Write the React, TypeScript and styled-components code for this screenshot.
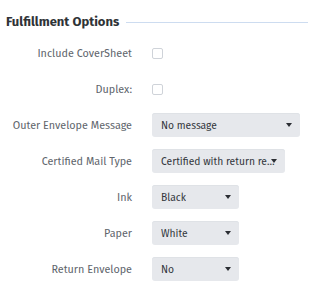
import { createGlobalStyle, styled } from 'styled-components';

const GlobalStyle = createGlobalStyle`
  html, body {
    margin: 0;
    padding: 0;
    background: #ffffff;
  }
  body {
    font-family: 'Fira Sans', Lato, 'Liberation Sans', sans-serif;
  }
`;

type Field =
  | { kind: 'check'; label: string }
  | { kind: 'select'; label: string; value: string; width: number };

const fields: Field[] = [
  { kind: 'check', label: 'Include CoverSheet' },
  { kind: 'check', label: 'Duplex:' },
  { kind: 'select', label: 'Outer Envelope Message', value: 'No message', width: 148 },
  { kind: 'select', label: 'Certified Mail Type', value: 'Certified with return receipt', width: 133 },
  { kind: 'select', label: 'Ink', value: 'Black', width: 87 },
  { kind: 'select', label: 'Paper', value: 'White', width: 87 },
  { kind: 'select', label: 'Return Envelope', value: 'No', width: 87 },
];

export default function App() {
  return (
    <>
      <GlobalStyle />
      <Panel>
        <Header>
          <Title>Fulfillment Options</Title>
          <Rule />
        </Header>
        <Form>
          {fields.map((f) => (
            <Row key={f.label}>
              <Label>{f.label}</Label>
              {f.kind === 'check' ? (
                <Checkbox />
              ) : (
                <Select $width={f.width}>
                  <SelectText>{f.value}</SelectText>
                  <Caret />
                </Select>
              )}
            </Row>
          ))}
        </Form>
      </Panel>
    </>
  );
}

const Panel = styled.div`
  width: 314px;
  height: 290px;
  padding: 13px 6px 0 6px;
  box-sizing: border-box;
`;
const Header = styled.div`
  display: flex;
  align-items: center;
  gap: 7px;
  height: 17px;
`;
const Title = styled.h3`
  margin: 0;
  font-size: 13px;
  font-weight: 700;
  color: #2f3337;
  white-space: nowrap;
`;
const Rule = styled.div`
  flex: 1;
  height: 1px;
  margin-top: 1px;
  background: #cddcf0;
`;
const Form = styled.div`
  display: flex;
  flex-direction: column;
  gap: 12px;
  margin-top: 11px;
`;
const Row = styled.div`
  display: grid;
  grid-template-columns: 126px auto;
  column-gap: 20px;
  align-items: center;
  height: 24px;
`;
const Label = styled.div`
  text-align: right;
  font-size: 10.8px;
  color: #60656c;
  white-space: nowrap;
`;
const Checkbox = styled.span`
  display: block;
  width: 9px;
  height: 9px;
  border: 1px solid #cfd3d9;
  border-radius: 2px;
  background: #fff;
`;
const Select = styled.div<{ $width: number }>`
  position: relative;
  display: flex;
  align-items: center;
  width: ${({ $width }) => $width}px;
  height: 24px;
  box-sizing: border-box;
  padding: 0 7px 0 9px;
  background: #e6e8ec;
  border-radius: 3px;
  box-shadow: inset 0 1px 0 #dfe2e6;
`;
const SelectText = styled.span`
  font-size: 10.3px;
  color: #33373c;
  white-space: nowrap;
  overflow: hidden;
  text-overflow: ellipsis;
`;
const Caret = styled.span`
  position: absolute;
  right: 8px;
  top: 10px;
  width: 0;
  height: 0;
  border-left: 3px solid transparent;
  border-right: 3px solid transparent;
  border-top: 4px solid #2b2e33;
`;
